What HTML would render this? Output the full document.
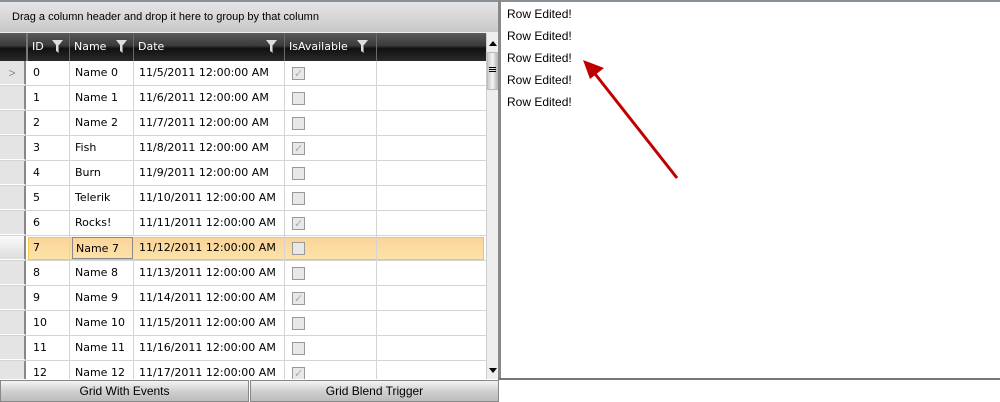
<!DOCTYPE html>
<html><head><style>
*{margin:0;padding:0;box-sizing:border-box}
body{width:1000px;height:402px;background:#fff;font-family:"Liberation Sans",sans-serif;font-size:12px;color:#000;position:relative;overflow:hidden}
.a{position:absolute}
.grp{left:0;top:0;width:500px;height:33px;background:linear-gradient(#e6e6e6,#c8c8c8);border-top:2px solid #8a9098;border-bottom:1px solid #eee;font-size:11px;line-height:31px;padding-left:12px}
.hdr{left:0;top:33px;width:486px;height:28px;background:linear-gradient(#5a5a5a 0%,#3a3a3a 45%,#111 55%,#2a2a2a 100%)}
.hc{position:absolute;top:0;height:28px;border-right:1px solid #6a6a6a;color:#fff;line-height:28px;padding-left:4px;font-family:"DejaVu Sans",sans-serif;font-size:11px}
.f{position:absolute;top:7px;width:11px;height:13px}
.body{left:0;top:61px;width:486px;height:318px;overflow:hidden}
.r{position:absolute;left:0;width:486px;height:25px;border-bottom:1px solid #d4d4d4}
.c{position:absolute;top:0;height:24px;line-height:24px;padding-left:5px;border-right:1px solid #d4d4d4;white-space:nowrap;font-family:"DejaVu Sans",sans-serif;font-size:11px}
.ri{position:absolute;left:0;top:0;width:26px;height:24px;background:#e4e4e4;border-right:2px solid #888;border-bottom:1px solid #fff}
.cb{position:absolute;left:7px;top:6px;width:13px;height:13px;border:1px solid #999;background:#e8e8e8}
.cb.k:after{content:"✓";position:absolute;left:1px;top:-6px;font-size:11px;color:#aaa}
.sel{background:linear-gradient(#fbd49a,#fce3a8)}
.sb{left:486px;top:33px;width:12px;height:346px;background:#eee;border-left:1px solid #ccc}
.btn{top:380px;height:22px;background:linear-gradient(#f4f4f4,#d0d0d0 50%,#bcbcbc);border:1px solid #888;text-align:center;line-height:20px;font-size:12px}
.re{left:507px;font-size:12px}
</style></head><body>
<div class="a grp">Drag a column header and drop it here to group by that column</div>
<div class="a hdr">
<div class="hc" style="left:0;width:28px;border-right:2px solid #777"></div>
<div class="hc" style="left:28px;width:42px">ID<svg class="f" style="left:24px" viewBox="0 0 11 13"><path d="M0 0H11L7 5V13L4 11V5Z" fill="#ddd"/><path d="M7 5V13L6 12V5Z" fill="#888"/></svg></div>
<div class="hc" style="left:70px;width:64px">Name<svg class="f" style="left:46px" viewBox="0 0 11 13"><path d="M0 0H11L7 5V13L4 11V5Z" fill="#ddd"/><path d="M7 5V13L6 12V5Z" fill="#888"/></svg></div>
<div class="hc" style="left:134px;width:151px">Date<svg class="f" style="left:132px" viewBox="0 0 11 13"><path d="M0 0H11L7 5V13L4 11V5Z" fill="#ddd"/><path d="M7 5V13L6 12V5Z" fill="#888"/></svg></div>
<div class="hc" style="left:285px;width:92px">IsAvailable<svg class="f" style="left:72px" viewBox="0 0 11 13"><path d="M0 0H11L7 5V13L4 11V5Z" fill="#ddd"/><path d="M7 5V13L6 12V5Z" fill="#888"/></svg></div>
</div>
<div class="a body">
<div class="r" style="top:0"><div class="ri" style="color:#888;text-align:center;line-height:24px">&gt;</div><div class="c" style="left:28px;width:42px">0</div><div class="c" style="left:70px;width:64px">Name 0</div><div class="c" style="left:134px;width:151px">11/5/2011 12:00:00 AM</div><div class="c" style="left:285px;width:92px"><div class="cb k"></div></div></div>
<div class="r" style="top:25px"><div class="ri"></div><div class="c" style="left:28px;width:42px">1</div><div class="c" style="left:70px;width:64px">Name 1</div><div class="c" style="left:134px;width:151px">11/6/2011 12:00:00 AM</div><div class="c" style="left:285px;width:92px"><div class="cb"></div></div></div>
<div class="r" style="top:50px"><div class="ri"></div><div class="c" style="left:28px;width:42px">2</div><div class="c" style="left:70px;width:64px">Name 2</div><div class="c" style="left:134px;width:151px">11/7/2011 12:00:00 AM</div><div class="c" style="left:285px;width:92px"><div class="cb"></div></div></div>
<div class="r" style="top:75px"><div class="ri"></div><div class="c" style="left:28px;width:42px">3</div><div class="c" style="left:70px;width:64px">Fish</div><div class="c" style="left:134px;width:151px">11/8/2011 12:00:00 AM</div><div class="c" style="left:285px;width:92px"><div class="cb k"></div></div></div>
<div class="r" style="top:100px"><div class="ri"></div><div class="c" style="left:28px;width:42px">4</div><div class="c" style="left:70px;width:64px">Burn</div><div class="c" style="left:134px;width:151px">11/9/2011 12:00:00 AM</div><div class="c" style="left:285px;width:92px"><div class="cb"></div></div></div>
<div class="r" style="top:125px"><div class="ri"></div><div class="c" style="left:28px;width:42px">5</div><div class="c" style="left:70px;width:64px">Telerik</div><div class="c" style="left:134px;width:151px">11/10/2011 12:00:00 AM</div><div class="c" style="left:285px;width:92px"><div class="cb"></div></div></div>
<div class="r" style="top:150px"><div class="ri"></div><div class="c" style="left:28px;width:42px">6</div><div class="c" style="left:70px;width:64px">Rocks!</div><div class="c" style="left:134px;width:151px">11/11/2011 12:00:00 AM</div><div class="c" style="left:285px;width:92px"><div class="cb k"></div></div></div>
<div class="r" style="top:175px"><div class="ri" style="background:linear-gradient(#fafafa,#ddd)"></div><div class="sel" style="position:absolute;left:28px;top:1px;width:456px;height:23px;border:1px solid #f5c842"></div><div class="c" style="left:28px;width:42px">7</div><div class="c" style="left:72px;width:61px;top:1px;height:22px;line-height:22px;border:1px solid #888;padding-left:3px">Name 7</div><div class="c" style="left:134px;width:151px">11/12/2011 12:00:00 AM</div><div class="c" style="left:285px;width:92px"><div class="cb"></div></div></div>
<div class="r" style="top:200px"><div class="ri"></div><div class="c" style="left:28px;width:42px">8</div><div class="c" style="left:70px;width:64px">Name 8</div><div class="c" style="left:134px;width:151px">11/13/2011 12:00:00 AM</div><div class="c" style="left:285px;width:92px"><div class="cb"></div></div></div>
<div class="r" style="top:225px"><div class="ri"></div><div class="c" style="left:28px;width:42px">9</div><div class="c" style="left:70px;width:64px">Name 9</div><div class="c" style="left:134px;width:151px">11/14/2011 12:00:00 AM</div><div class="c" style="left:285px;width:92px"><div class="cb k"></div></div></div>
<div class="r" style="top:250px"><div class="ri"></div><div class="c" style="left:28px;width:42px">10</div><div class="c" style="left:70px;width:64px">Name 10</div><div class="c" style="left:134px;width:151px">11/15/2011 12:00:00 AM</div><div class="c" style="left:285px;width:92px"><div class="cb"></div></div></div>
<div class="r" style="top:275px"><div class="ri"></div><div class="c" style="left:28px;width:42px">11</div><div class="c" style="left:70px;width:64px">Name 11</div><div class="c" style="left:134px;width:151px">11/16/2011 12:00:00 AM</div><div class="c" style="left:285px;width:92px"><div class="cb"></div></div></div>
<div class="r" style="top:300px"><div class="ri"></div><div class="c" style="left:28px;width:42px">12</div><div class="c" style="left:70px;width:64px">Name 12</div><div class="c" style="left:134px;width:151px">11/17/2011 12:00:00 AM</div><div class="c" style="left:285px;width:92px"><div class="cb k"></div></div></div>
</div>
<div class="a sb">
<svg class="a" style="left:2px;top:8px" width="8" height="5"><path d="M0 5L4 0L8 5Z" fill="#000"/></svg>
<div class="a" style="left:0;top:19px;width:11px;height:38px;background:linear-gradient(90deg,#ccc,#f4f4f4,#bbb);border:1px solid #bbb"></div>
<div class="a" style="left:2px;top:34px;width:7px;height:1px;background:#000;box-shadow:0 2px #000,0 4px #000"></div>
<svg class="a" style="left:2px;top:335px" width="8" height="5"><path d="M0 0L8 0L4 5Z" fill="#000"/></svg>
</div>
<div class="a" style="left:498px;top:0;width:3px;height:380px;background:#888"></div>
<div class="a" style="left:501px;top:0;width:499px;height:2px;background:#8a9098"></div>
<div class="a" style="left:498px;top:378px;width:502px;height:2px;background:#777"></div>
<div class="a btn" style="left:0;width:249px">Grid With Events</div>
<div class="a btn" style="left:250px;width:249px">Grid Blend Trigger</div>
<div class="a re" style="top:7px">Row Edited!</div>
<div class="a re" style="top:29px">Row Edited!</div>
<div class="a re" style="top:51px">Row Edited!</div>
<div class="a re" style="top:73px">Row Edited!</div>
<div class="a re" style="top:95px">Row Edited!</div>
<svg class="a" style="left:570px;top:50px" width="120" height="140"><line x1="107" y1="128" x2="22" y2="20" stroke="#c00000" stroke-width="3"/><path d="M13 10L34 18L20 29Z" fill="#c00000"/></svg>
</body></html>
